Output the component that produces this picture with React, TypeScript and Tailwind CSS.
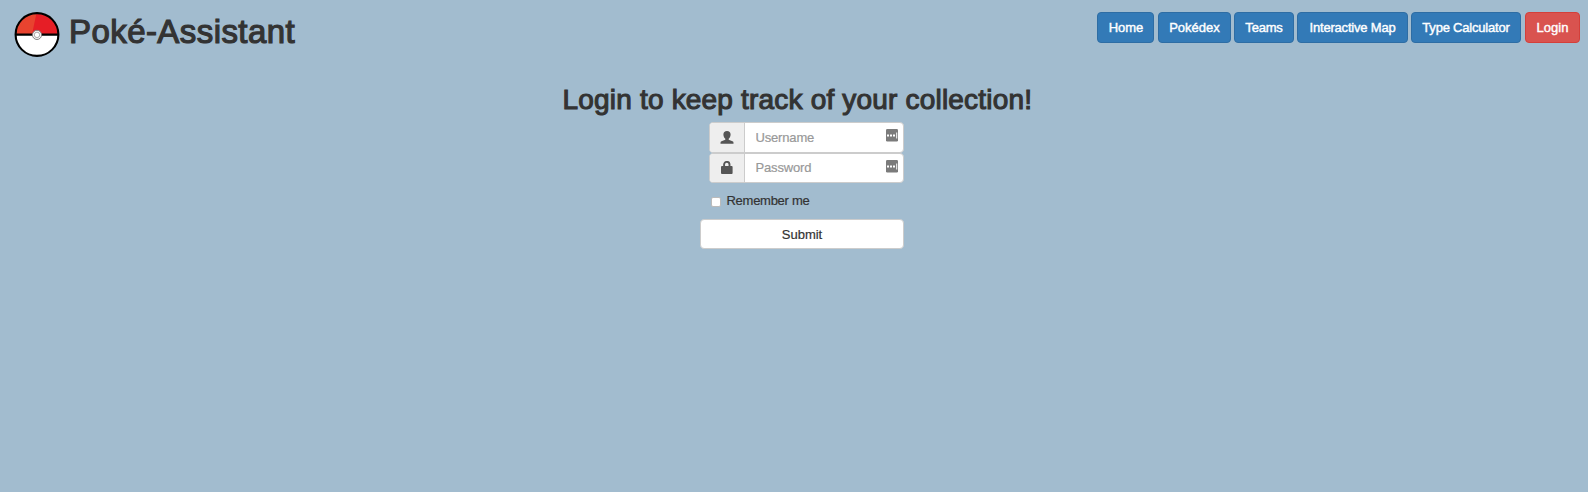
import React from "react";

function Pokeball() {
  return (
    <svg viewBox="0 0 46 46" className="mt-[11px] h-[46px] w-[46px] shrink-0">
      <circle cx="23" cy="23.500" r="21.5" fill="#fff" />
      <path d="M1.5 23.500a21.5 21.5 0 0 1 43 0z" fill="#e61e26" />
      <path d="M1.5 23.500A21.5 21.5 0 0 1 22.5 2Q20.5 11.500 18 23.500z" fill="#e8432f" />
      <circle cx="23" cy="23.500" r="21.400" fill="none" stroke="#000" strokeWidth="2.100" />
      <path d="M1.5 23.700h43" stroke="#000" strokeWidth="2.2" />
      <circle cx="23" cy="23.900" r="4.6" fill="#f4f4f4" stroke="#777" strokeWidth="0.9" />
      <circle cx="23" cy="23.900" r="2.7" fill="#fff" stroke="#999" strokeWidth="0.8" />
    </svg>
  );
}

function UserIcon() {
  return (
    <svg viewBox="0 0 14 13" className="h-[13px] w-[14px]" fill="#555">
      <path d="M7 0C4.700 0 3.400 1.400 3.400 3.5c0 1.900.8 3.400 1.900 4.300v1L1.500 10.300C.8 10.600.5 11.100.5 11.800v1h13v-1c0-.7-.3-1.200-1-1.500L8.700 8.800v-1c1.100-.9 1.900-2.400 1.900-4.300C10.600 1.400 9.300 0 7 0z" />
    </svg>
  );
}

function LockIcon() {
  return (
    <svg viewBox="0 0 14 13" className="h-[13px] w-[14px]">
      <path d="M4.100 6V3.600a2.700 2.700 0 0 1 5.400 0V6" fill="none" stroke="#555" strokeWidth="1.900" />
      <rect x="1" y="5" width="11.600" height="8" rx="1" fill="#555" />
    </svg>
  );
}

function KeyIcon() {
  return (
    <svg viewBox="0 0 12 13" className="mr-[5px] h-[13px] w-[12px] shrink-0">
      <rect width="12" height="12.500" rx="1.200" fill="#7b7b7b" />
      <path d="M1 5.500h2v2h-2zM4 5.500h2v2h-2zM7 5.500h2v2h-2zM10.200 3.500h1v6h-1z" fill="#fff" />
    </svg>
  );
}

const links = [
  { label: "Home", cls: "w-[57px] mr-[4px] pl-px" },
  { label: "Pokédex", cls: "w-[73px] mr-[3px]" },
  { label: "Teams", cls: "w-[60px] mr-[3px] tracking-[-0.200px]" },
  { label: "Interactive Map", cls: "w-[111px] mr-[3px] tracking-[-0.200px]" },
  { label: "Type Calculator", cls: "w-[110px] mr-[4px] tracking-[-0.200px]" },
];

function Field({ label, icon }: { label: string; icon: React.ReactNode }) {
  return (
    <div className="flex h-[30.500px] w-[195px] overflow-hidden rounded-[4px] border border-[#ccc] bg-white">
      <div className="flex w-[35px] shrink-0 items-center justify-center border-r border-[#ccc] bg-[#eee]">{icon}</div>
      <input placeholder={label} className="w-full min-w-0 bg-transparent pl-[10.500px] text-[13px] tracking-[-0.170px] text-[#555] outline-none placeholder:text-[#999] placeholder:[-webkit-text-stroke:0.200px_#999]" />
      <div className="pt-[6px]"><KeyIcon /></div>
    </div>
  );
}

export default function App() {
  return (
    <div className="h-[492px] w-full overflow-hidden bg-[#a2bccf] font-['Liberation_Sans',Arial,sans-serif] text-[13px] text-[#333]">
      <header className="flex h-[76px] items-start pr-[8px] pl-[14px]">
        <Pokeball />
        <h1 className="mt-[14px] ml-[9px] text-[33px] leading-[36px] tracking-[0.430px] whitespace-nowrap [-webkit-text-stroke:1.200px_#333]">Poké-Assistant</h1>
        <nav className="mt-[12px] ml-auto flex text-white [-webkit-text-stroke:0.400px_#fff]">
          {links.map((l) => (
            <button key={l.label} className={`h-[31px] rounded-[4px] border border-[#2e6da4] bg-[#337ab7] whitespace-nowrap ${l.cls}`}>{l.label}</button>
          ))}
          <button className="h-[31px] w-[55px] rounded-[4px] border border-[#d43f3a] bg-[#d9534f]">Login</button>
        </nav>
      </header>
      <main>
        <h2 className="mt-[8px] ml-[562.500px] h-[38px] text-[28px] leading-[32px] tracking-[0.190px] whitespace-nowrap [-webkit-text-stroke:1.100px_#333]">Login to keep track of your collection!</h2>
        <form className="ml-[700px] w-[204px]">
          <div className="ml-[9px]">
            <Field label="Username" icon={<UserIcon />} />
            <Field label="Password" icon={<LockIcon />} />
            <label className="mt-[10px] flex h-[16px] items-center pl-[1.500px]">
              <input type="checkbox" className="mt-px h-[10px] w-[10px] appearance-none rounded-[2px] border border-[#bbb] bg-white" />
              <span className="ml-[6px] tracking-[-0.270px] [-webkit-text-stroke:0.200px_#333]">Remember me</span>
            </label>
          </div>
          <button type="button" className="mt-[10px] block h-[30px] w-[204px] rounded-[4px] border border-[#ccc] bg-white pt-[2px] [-webkit-text-stroke:0.200px_#333]">Submit</button>
        </form>
      </main>
    </div>
  );
}
